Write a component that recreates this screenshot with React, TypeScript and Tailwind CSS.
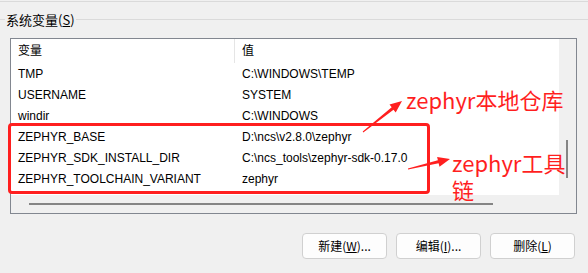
import React from 'react';

const rows: [string, string][] = [
  ['TMP', 'C:\\WINDOWS\\TEMP'],
  ['USERNAME', 'SYSTEM'],
  ['windir', 'C:\\WINDOWS'],
  ['ZEPHYR_BASE', 'D:\\ncs\\v2.8.0\\zephyr'],
  ['ZEPHYR_SDK_INSTALL_DIR', 'C:\\ncs_tools\\zephyr-sdk-0.17.0'],
  ['ZEPHYR_TOOLCHAIN_VARIANT', 'zephyr'],
];

const uiFont = "font-['Liberation_Sans','Noto_Sans_CJK_SC',sans-serif]";

const App = () => {
  return (
    <div
      className={`relative w-[588px] h-[273px] overflow-hidden bg-[#f0f0f0] text-[12px] text-black ${uiFont}`}
    >
      <div className="mt-[1px] h-px bg-[#dadada]" />

      {/* group box title */}
      <div className="mt-[9px] flex h-[16px] items-center">
        <div className="h-px w-[5px] bg-[#dadada]" />
        <span className="px-[1px] text-[13px] leading-none font-['Noto_Sans_CJK_SC',sans-serif]">
          系统变量(<span className="underline">S</span>)
        </span>
        <div className="h-px flex-1 bg-[#dadada]" />
      </div>

      {/* list view */}
      <div className="ml-[10px] mt-[11px] flex h-[176px] w-[567px] border border-[#828790]">
        <div className="flex w-[548px] flex-col">
          <div className="h-[156px] bg-white">
            <div className="flex h-[24px] items-center">
              <div className="w-[223px] pl-[7px]">变量</div>
              <div className="h-[24px] w-px bg-[#e5e5e5]" />
              <div className="pl-[7px]">值</div>
            </div>
            {rows.map(([name, value]) => (
              <div key={name} className="flex h-[21px] items-center">
                <div className="w-[224px] pl-[7px]">{name}</div>
                <div className="pl-[7px]">{value}</div>
              </div>
            ))}
          </div>
          <div className="h-[18px] pl-[18px] pt-[8px]">
            <div className="h-[2px] w-[464px] bg-[#858585]" />
          </div>
        </div>
        <div className="w-[16px] pl-[7px] pt-[101px]">
          <div className="h-[38px] w-[2px] bg-[#858585]" />
        </div>
      </div>

      {/* buttons */}
      <div className="mt-[19px] flex justify-end gap-[9px] pr-[13px]">
        <button className="h-[26px] w-[85px] rounded-[4px] border border-[#d0d0d0] bg-[#fdfdfd] text-[12px] font-['Noto_Sans_CJK_SC',sans-serif]">
          新建(<span className="underline">W</span>)...
        </button>
        <button className="h-[26px] w-[85px] rounded-[4px] border border-[#d0d0d0] bg-[#fdfdfd] text-[12px] font-['Noto_Sans_CJK_SC',sans-serif]">
          编辑(<span className="underline">I</span>)...
        </button>
        <button className="h-[26px] w-[85px] rounded-[4px] border border-[#d0d0d0] bg-[#fdfdfd] text-[12px] font-['Noto_Sans_CJK_SC',sans-serif]">
          删除(<span className="underline">L</span>)
        </button>
      </div>

      {/* annotations */}
      <div className="absolute left-[8px] top-[123px] h-[71px] w-[422px] rounded-[4px] border-[3px] border-[#ff1f1f]" />
      <svg className="absolute left-0 top-0" width="588" height="273">
        <polygon
          fill="#ff1f1f"
          points="363.3,132.4 393.5,109.7 395.7,112.4 402,101 389.5,104.6 391.7,107.3 362.7,131.6"
        />
        <polygon
          fill="#ff1f1f"
          points="408.1,169.5 438.6,163.3 439.5,166.7 450,159 437.1,156.9 437.9,160.3 407.9,168.5"
        />
      </svg>
      <div className="absolute left-[406px] top-[86px] text-[22px] leading-[27px] text-[#ff1f1f] font-['Noto_Sans_CJK_SC',sans-serif]">
        zephyr本地仓库
      </div>
      <div className="absolute left-[452px] top-[149px] text-[22px] leading-[27px] text-[#ff1f1f] font-['Noto_Sans_CJK_SC',sans-serif]">
        zephyr工具
        <br />链
      </div>
    </div>
  );
};

export default App;
